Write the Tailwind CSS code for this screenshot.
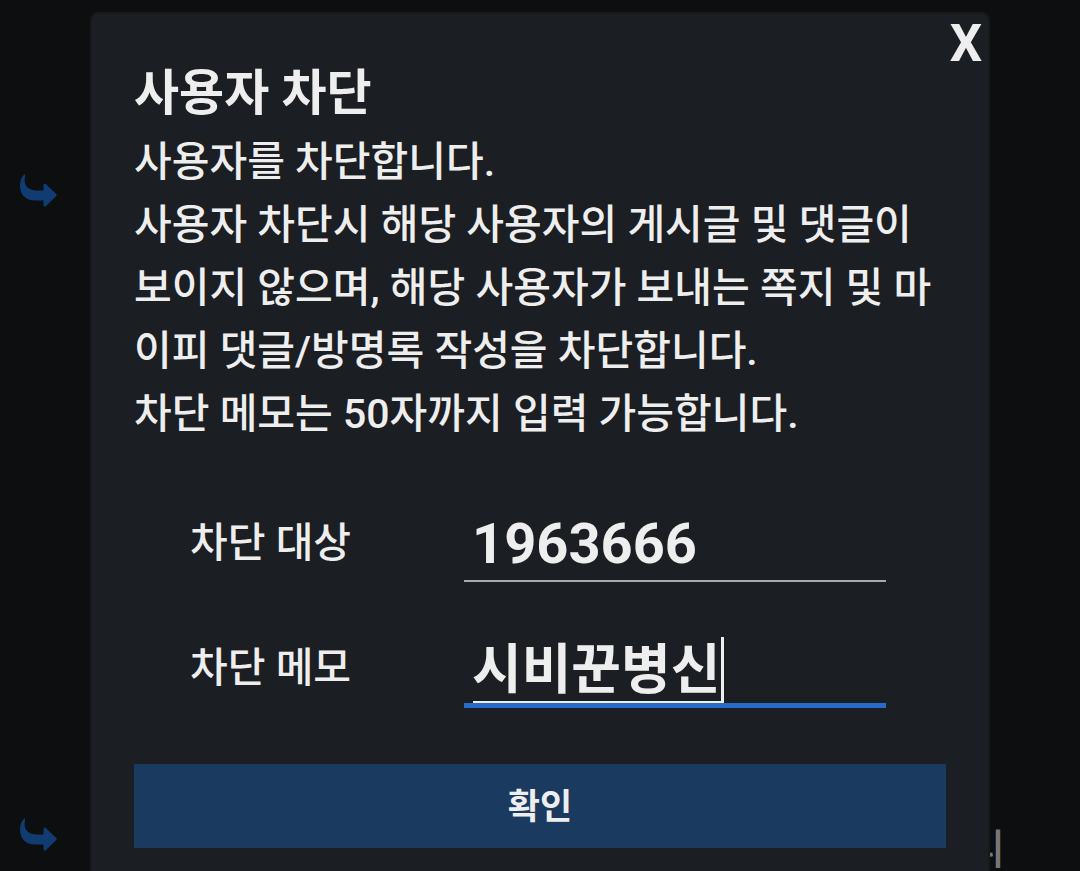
<!DOCTYPE html>
<html lang="ko">

<head>
  <meta charset="UTF-8" />
  <meta name="viewport" content="width=device-width, initial-scale=1.0" />
  <title>사용자 차단</title>
  <script src="https://cdn.jsdelivr.net/npm/@tailwindcss/browser@4"></script>
</head>

<body class="relative h-screen overflow-hidden bg-[#0d0e10] font-[Roboto,'Noto_Sans_CJK_KR',sans-serif] text-[#eeeeee]">

  <!-- Comment list behind the modal -->
  <svg class="absolute left-5 top-[174px] w-[37px] h-[33px] fill-[#113c72]" viewBox="0 0 37 33" aria-hidden="true">
    <path d="M4 0.5C1.500 3 0 7 0 11.500C0 21 6 26.500 15 26.500H23.500V31.500Q24 33 25.500 32.500L36.500 21.800Q37 21 36.500 20.200L25.500 9.800Q24 9.300 23.500 10.500V16.500H17C9 16.500 5 12.500 4.600 7C4.500 4 5.500 2 4.800 0.500Q4.400 0 4 0.500Z" />
  </svg>
  <svg class="absolute left-5 top-[818px] w-[37px] h-[33px] fill-[#113c72]" viewBox="0 0 37 33" aria-hidden="true">
    <path d="M4 0.5C1.500 3 0 7 0 11.500C0 21 6 26.500 15 26.500H23.500V31.500Q24 33 25.500 32.500L36.500 21.800Q37 21 36.500 20.200L25.500 9.800Q24 9.300 23.500 10.500V16.500H17C9 16.500 5 12.500 4.600 7C4.500 4 5.500 2 4.800 0.500Q4.400 0 4 0.500Z" />
  </svg>
  <p class="absolute right-[75px] top-5/6 pt-[94px] text-[41px] leading-[60px] font-medium text-[#777777]">니</p>

  <!-- Modal -->
  <div role="dialog" aria-labelledby="modal-title"
    class="relative w-5/6 min-h-screen mx-auto mt-3 px-[42px] pt-12 rounded-lg border-2 border-[#18191b] bg-[#1b1e22]">
    <button type="button" aria-label="닫기" class="absolute top-0 right-1.5 text-[51px] leading-[60px] font-bold">X</button>

    <h1 id="modal-title" class="text-[49px] leading-[64px] font-bold">사용자 차단</h1>
    <p class="mt-[5px] text-[41px] leading-[63px] font-medium">
      사용자를 차단합니다.<br />
      사용자 차단시 해당 사용자의 게시글 및 댓글이<br />
      보이지 않으며, 해당 사용자가 보내는 쪽지 및 마<br />
      이피 댓글/방명록 작성을 차단합니다.<br />
      차단 메모는 50자까지 입력 가능합니다.
    </p>

    <form class="mt-[58px]">
      <div class="pl-14 pr-[60px] flex flex-col gap-[42px]">
        <div class="flex items-center justify-between">
          <label for="target" class="text-[41px] leading-[60px] font-medium">차단 대상</label>
          <input id="target" type="text" value="1963666"
            class="w-[422px] h-[78px] px-2 pt-1 border-b-2 border-[#a9a9ad] bg-transparent text-[56px] font-bold outline-none" />
        </div>
        <div class="flex items-center justify-between">
          <label for="memo" class="pt-1 text-[41px] leading-[60px] font-medium">차단 메모</label>
          <div class="relative">
            <input id="memo" type="text" maxlength="50" value="시비꾼병신"
              class="block w-[422px] h-[84px] px-2 pt-1 border-b-[5px] border-[#256dc9] bg-transparent text-[54px] font-bold outline-none" />
            <!-- Composing text underline and caret -->
            <span class="absolute left-[9px] bottom-[5px] w-[251px] h-[66px] border-b-2 border-r-[3px] border-[#eeeeee] pointer-events-none"></span>
          </div>
        </div>
      </div>
      <button type="submit" class="mt-14 pt-1 w-full h-[84px] bg-[#1b3a60] text-[35px] font-bold">확인</button>
    </form>
  </div>

</body>

</html>
